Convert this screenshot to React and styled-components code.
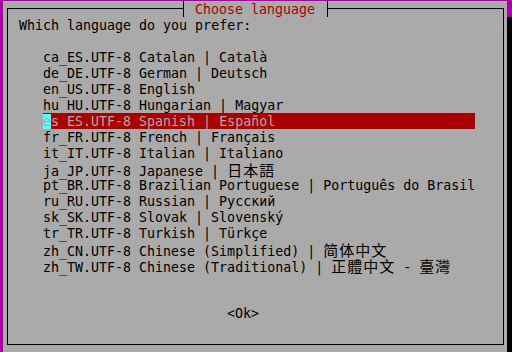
import React from "react";
import styled, { createGlobalStyle } from "styled-components";

const GlobalStyle = createGlobalStyle`
  html, body {
    margin: 0;
    padding: 0;
    background: #aa00aa;
    overflow: hidden;
  }
  * { box-sizing: border-box; }
`;

const Screen = styled.div`
  width: 512px;
  height: 352px;
  overflow: hidden;
  padding: 1px 0 0 3px;
  background: #aa00aa;
  font-family: "DejaVu Sans Mono", "Liberation Mono", monospace;
  font-size: 13.3px;
  color: #000;
`;

const Window = styled.div`
  position: relative;
  width: 504px;
  height: 352px;
  background: #aaaaaa;
  padding: 7px 3px 8px 4px;
  box-shadow: 8px 16px 0 #000;
`;

const Frame = styled.div`
  height: 100%;
  border: 1px solid #000;
  padding: 8px 0 0 11px;
  display: flex;
  flex-direction: column;
`;

const Title = styled.div`
  position: absolute;
  left: 176px;
  top: 0;
  height: 16px;
  display: flex;
  background: #aaaaaa;
`;

const Tee = styled.span`
  position: relative;
  display: inline-block;
  width: 8px;
  height: 16px;
  &::before {
    content: "";
    position: absolute;
    left: 4px;
    top: 0;
    width: 1px;
    height: 16px;
    background: #000;
  }
  &::after {
    content: "";
    position: absolute;
    top: 7px;
    left: ${(p) => (p.$side === "left" ? "0" : "4px")};
    width: 4px;
    height: 1px;
    background: #000;
  }
`;

const Row = styled.div`
  height: 16px;
  padding-top: 2px;
  line-height: 14px;
  white-space: pre;
  color: #000;
`;

const TitleText = styled(Row)`
  color: #aa0000;
`;

const List = styled.div`
  margin-top: 16px;
  padding-left: 24px;
  display: flex;
  flex-direction: column;
`;

const Item = styled(Row)`
  width: 432px;
  background: ${(p) => (p.$selected ? "#aa0000" : "transparent")};
  color: ${(p) => (p.$selected ? "#aaaaaa" : "#000")};
`;

const Cursor = styled.span`
  background: #55ffff;
  color: #aaaaaa;
`;

const Wide = styled.span`
  font-family: ${(p) => p.$font}, "Noto Sans CJK SC", sans-serif;
  font-size: 15px;
  letter-spacing: 1px;
`;

const ButtonRow = styled(Row)`
  margin-top: 32px;
  padding-left: 208px;
`;

const JP = '"Noto Sans CJK JP"';
const SC = '"Noto Sans CJK SC"';
const TC = '"Noto Sans CJK TC"';

const items = [
  ["ca_ES.UTF-8 Catalan | Català"],
  ["de_DE.UTF-8 German | Deutsch"],
  ["en_US.UTF-8 English"],
  ["hu_HU.UTF-8 Hungarian | Magyar"],
  ["es_ES.UTF-8 Spanish | Español", true],
  ["fr_FR.UTF-8 French | Français"],
  ["it_IT.UTF-8 Italian | Italiano"],
  ["ja_JP.UTF-8 Japanese | ", false, [[JP, "日本語"]]],
  ["pt_BR.UTF-8 Brazilian Portuguese | Português do Brasil"],
  ["ru_RU.UTF-8 Russian | Русский"],
  ["sk_SK.UTF-8 Slovak | Slovenský"],
  ["tr_TR.UTF-8 Turkish | Türkçe"],
  ["zh_CN.UTF-8 Chinese (Simplified) | ", false, [[SC, "简体中文"]]],
  ["zh_TW.UTF-8 Chinese (Traditional) | ", false, [[TC, "正體中文"], [null, " - "], [TC, "臺灣"]]],
];

export default function App() {
  return (
    <>
      <GlobalStyle />
      <Screen>
        <Window>
          <Title>
            <Tee $side="left" />
            <TitleText> Choose language </TitleText>
            <Tee $side="right" />
          </Title>
          <Frame>
            <Row>Which language do you prefer:</Row>
            <List>
              {items.map(([text, selected, extra], i) => (
                <Item key={i} $selected={selected}>
                  {selected ? (
                    <>
                      <Cursor>{text[0]}</Cursor>
                      {text.slice(1)}
                    </>
                  ) : (
                    text
                  )}
                  {extra &&
                    extra.map(([font, t], j) =>
                      font ? (
                        <Wide key={j} $font={font}>
                          {t}
                        </Wide>
                      ) : (
                        <span key={j}>{t}</span>
                      )
                    )}
                </Item>
              ))}
            </List>
            <ButtonRow>&lt;Ok&gt;</ButtonRow>
          </Frame>
        </Window>
      </Screen>
    </>
  );
}
